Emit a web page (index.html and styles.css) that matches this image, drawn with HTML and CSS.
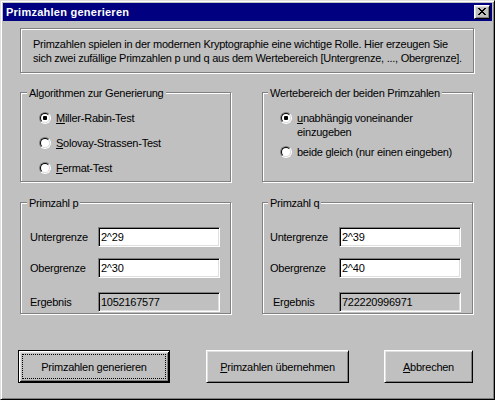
FILE: index.html
```html
<!DOCTYPE html>
<html lang="de">
<head>
<meta charset="utf-8">
<title>Primzahlen generieren</title>
<link rel="stylesheet" href="styles.css">
</head>
<body>
<div class="window">
  <div class="titlebar">
    <span class="title">Primzahlen generieren</span>
    <span class="close"><svg width="8" height="7" viewBox="0 0 8 7" shape-rendering="crispEdges"><path d="M0 0h2v1H0zM6 0h2v1H6zM1 1h2v1H1zM5 1h2v1H5zM2 2h4v1H2zM3 3h2v1H3zM2 4h4v1H2zM1 5h2v1H1zM5 5h2v1H5zM0 6h2v1H0zM6 6h2v1H6z"/></svg></span>
  </div>
  <div class="content">
    <div class="info etched">Primzahlen spielen in der modernen Kryptographie eine wichtige Rolle. Hier erzeugen Sie<br>sich zwei zufällige Primzahlen p und q aus dem Wertebereich [Untergrenze, ..., Obergrenze].</div>

    <div class="row row-top">
      <div class="group etched g-algo">
        <span class="legend">Algorithmen zur Generierung</span>
        <div class="opt"><span class="radio checked"></span><span><u>M</u>iller-Rabin-Test</span></div>
        <div class="opt"><span class="radio"></span><span><u>S</u>olovay-Strassen-Test</span></div>
        <div class="opt"><span class="radio"></span><span><u>F</u>ermat-Test</span></div>
      </div>
      <div class="group etched g-range right">
        <span class="legend">Wertebereich der beiden Primzahlen</span>
        <div class="opt opt-multi"><span class="radio checked"></span><span><u>u</u>nabhängig voneinander<br>einzugeben</span></div>
        <div class="opt opt-second"><span class="radio"></span><span>beide gleich (nur einen eingeben)</span></div>
      </div>
    </div>

    <div class="row row-bottom">
      <div class="group etched g-prime">
        <span class="legend">Primzahl p</span>
        <div class="frow"><span class="lbl">Untergrenze</span><input class="field" type="text" value="2^29"></div>
        <div class="frow"><span class="lbl">Obergrenze</span><input class="field" type="text" value="2^30"></div>
        <div class="frow frow-result"><span class="lbl">Ergebnis</span><input class="field readonly" type="text" value="1052167577" readonly></div>
      </div>
      <div class="group etched g-prime right">
        <span class="legend">Primzahl q</span>
        <div class="frow"><span class="lbl">Untergrenze</span><input class="field" type="text" value="2^39"></div>
        <div class="frow"><span class="lbl">Obergrenze</span><input class="field" type="text" value="2^40"></div>
        <div class="frow frow-result"><span class="lbl lbl-indent">Ergebnis</span><input class="field readonly" type="text" value="722220996971" readonly></div>
      </div>
    </div>

    <div class="buttons">
      <button class="btn btn-default b1" type="button">Primzahlen <u>g</u>enerieren</button>
      <button class="btn b2" type="button"><u>P</u>rimzahlen übernehmen</button>
      <button class="btn b3" type="button"><u>A</u>bbrechen</button>
    </div>
  </div>
</div>
</body>
</html>
```
FILE: styles.css
```css
html, body {
  margin: 0;
  padding: 0;
}

body {
  width: 495px;
  height: 400px;
  overflow: hidden;
  background: #c0c0c0;
  font-family: "Liberation Sans", Arial, sans-serif;
  font-size: 11px;
  line-height: 14px;
  letter-spacing: -0.25px;
  color: #000;
}

.window {
  box-sizing: border-box;
  width: 495px;
  height: 400px;
  background: #c0c0c0;
  border: 1px solid;
  border-color: #dfdfdf #000 #000 #dfdfdf;
  box-shadow: inset 1px 1px #fff, inset -1px -1px #808080;
  padding: 2px;
  display: flex;
  flex-direction: column;
}

.titlebar {
  height: 18px;
  flex: none;
  background: #000080;
  display: flex;
  align-items: center;
  justify-content: space-between;
  padding: 0 2px 0 3px;
}

.title {
  color: #fff;
  font-weight: bold;
  letter-spacing: 0.25px;
  line-height: 18px;
}

.close {
  box-sizing: border-box;
  width: 16px;
  height: 14px;
  background: #c0c0c0;
  border: 1px solid;
  border-color: #fff #000 #000 #fff;
  box-shadow: inset 1px 1px #dfdfdf, inset -1px -1px #808080;
  display: flex;
  align-items: flex-start;
  padding: 2px 0 0 3px;
}

.close svg {
  display: block;
  fill: #000;
}

.content {
  flex: 1;
  display: flex;
  flex-direction: column;
}

.etched {
  box-sizing: border-box;
  border: 1px solid #808080;
  box-shadow: 1px 1px #fff, inset 1px 1px #fff;
}

.info {
  width: 454px;
  height: 45px;
  margin: 7px 0 0 17px;
  padding: 8px 0 0 12px;
  white-space: nowrap;
}

.row {
  display: flex;
  margin-left: 17px;
}

.row-top {
  margin-top: 19px;
}

.row-bottom {
  margin-top: 20px;
}

.group {
  position: relative;
  width: 211px;
  display: flex;
  flex-direction: column;
}

.group.right {
  margin-left: 31px;
}

.legend {
  position: absolute;
  top: -7px;
  left: 6px;
  padding: 0 2px;
  background: #c0c0c0;
  white-space: nowrap;
}

.group.right .legend {
  left: 5px;
}

.g-algo,
.g-range {
  height: 90px;
  padding: 18px 0 0 18px;
}

.g-algo {
  gap: 11px;
}

.g-range {
  padding-left: 17px;
}

.opt {
  display: flex;
  align-items: center;
  gap: 5px;
  height: 14px;
  white-space: nowrap;
}

.opt-multi {
  height: 28px;
  align-items: flex-start;
}

.opt-multi .radio {
  margin-top: 1px;
}

.opt-second {
  margin-top: 6px;
}

.radio {
  position: relative;
  flex: none;
  box-sizing: border-box;
  width: 12px;
  height: 12px;
  border-radius: 50%;
  border: 1px solid;
  border-color: #808080 #fff #fff #808080;
}

.radio::before {
  content: "";
  position: absolute;
  inset: 0;
  border-radius: 50%;
  border: 1px solid;
  border-color: #000 #dfdfdf #dfdfdf #000;
  background: #fff;
}

.radio.checked::after {
  content: "";
  position: absolute;
  left: 3px;
  top: 3px;
  width: 4px;
  height: 4px;
  border-radius: 1px;
  background: #000;
}

.g-prime {
  height: 112px;
  padding: 24px 0 0 9px;
}

.g-prime.right {
  padding-left: 7px;
}

.frow {
  display: grid;
  grid-template-columns: 68px 122px;
  align-items: center;
  height: 20px;
}

.g-prime.right .frow {
  grid-template-columns: 69px 122px;
}

.frow + .frow {
  margin-top: 11px;
}

.frow.frow-result {
  margin-top: 14px;
}

.lbl-indent {
  padding-left: 3px;
}

.field {
  box-sizing: border-box;
  width: 122px;
  height: 20px;
  margin: 0;
  padding: 0 2px;
  font: inherit;
  letter-spacing: inherit;
  color: #000;
  background: #fff;
  border: 1px solid;
  border-color: #808080 #fff #fff #808080;
  box-shadow: inset 1px 1px #000, inset -1px -1px #dfdfdf;
  border-radius: 0;
  outline: none;
}

.field.readonly {
  background: #c0c0c0;
}

.buttons {
  display: flex;
  margin: 36px 0 0 15px;
}

.btn {
  position: relative;
  box-sizing: border-box;
  height: 33px;
  margin: 0;
  padding: 0;
  font: inherit;
  letter-spacing: inherit;
  color: #000;
  background: #c0c0c0;
  border: 1px solid;
  border-color: #fff #000 #000 #fff;
  box-shadow: inset 1px 1px #dfdfdf, inset -1px -1px #808080;
  border-radius: 0;
}

.btn-default {
  border-color: #000;
  box-shadow: inset 1px 1px #fff, inset -1px -1px #000, inset 2px 2px #dfdfdf, inset -2px -2px #808080;
}

.btn-default::after {
  content: "";
  position: absolute;
  inset: 3px;
  border: 1px dotted #000;
}

.b1 {
  width: 152px;
}

.b2 {
  width: 143px;
  margin-left: 36px;
}

.b3 {
  width: 89px;
  margin-left: 35px;
}
```
